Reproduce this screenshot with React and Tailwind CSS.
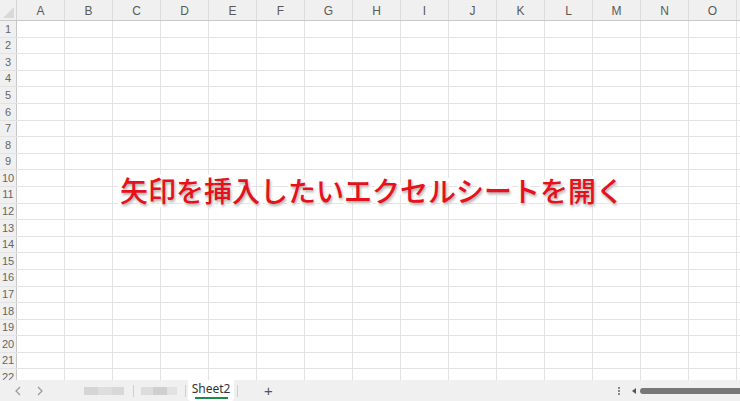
import React from 'react';

const cols = ['A', 'B', 'C', 'D', 'E', 'F', 'G', 'H', 'I', 'J', 'K', 'L', 'M', 'N', 'O', 'P'];
const rows = Array.from({ length: 22 }, (_, i) => i + 1);

function App() {
  return (
    <div className="w-[740px] h-[401px] overflow-hidden bg-white flex flex-col font-['Liberation_Sans','Noto_Sans_CJK_JP',sans-serif]">
      <div className="relative h-[380px] overflow-hidden">
        {/* column header */}
        <div className="flex h-[21px] bg-[#f0f0f0] border-b border-[#c8c8c8]">
          <div className="relative w-[17px] shrink-0 border-r border-[#d4d4d4]">
            <div className="absolute right-[2px] bottom-[2px] w-0 h-0 border-l-[11px] border-l-transparent border-b-[11px] border-b-[#d9d9d9]" />
          </div>
          {cols.map((c) => (
            <div key={c} className="w-[48px] shrink-0 border-r border-[#dcdcdc] flex items-center justify-center text-[12px] text-[#5a5a5a] pt-[1px]">
              {c}
            </div>
          ))}
        </div>
        {/* rows */}
        {rows.map((r) => (
          <div key={r} className="flex h-[16.6px] border-b border-[#e3e3e3]">
            <div className="w-[17px] shrink-0 bg-[#f0f0f0] border-r border-[#c8c8c8] flex items-center justify-center text-[11px] text-[#666]">
              {r}
            </div>
            {cols.map((c) => (
              <div key={c} className="w-[48px] shrink-0 border-r border-[#e3e3e3]" />
            ))}
          </div>
        ))}
        {/* caption */}
        <div className="absolute left-0 right-0 top-[172px] flex justify-center">
          <span className="pl-[4px] text-[28px] leading-[36px] font-medium text-[#e8101a] font-['Noto_Sans_CJK_JP',sans-serif] [paint-order:stroke_fill] [-webkit-text-stroke:6px_white] [text-shadow:1px_2px_3px_rgba(0,0,0,0.35)]">
            矢印を挿入したいエクセルシートを開く
          </span>
        </div>
      </div>
      {/* sheet tabs bar */}
      <div className="h-[21px] bg-[#f0f0f0] flex items-center text-[#777]">
        <div className="flex items-center w-[84px] pl-[14px] gap-[14px] text-[12px]">
          <svg width="8" height="10" viewBox="0 0 8 10"><path d="M6 1 L2 5 L6 9" fill="none" stroke="#999" strokeWidth="1.2" /></svg>
          <svg width="8" height="10" viewBox="0 0 8 10"><path d="M2 1 L6 5 L2 9" fill="none" stroke="#999" strokeWidth="1.2" /></svg>
        </div>
        <div className="flex h-[8px] w-[40px]">
          <div className="w-[14px] bg-[#d5d5d5]" />
          <div className="w-[14px] bg-[#dedede]" />
          <div className="w-[12px] bg-[#d8d8d8]" />
        </div>
        <div className="w-px h-[12px] bg-[#cfcfcf] ml-[9px] mr-[7px]" />
        <div className="flex h-[8px] w-[36px]">
          <div className="w-[12px] bg-[#dcdcdc]" />
          <div className="w-[14px] bg-[#cfcfcf]" />
          <div className="w-[10px] bg-[#e2e2e2]" />
        </div>
        <div className="w-px h-[12px] bg-[#cfcfcf] ml-[8px] mr-[2px]" />
        <div className="h-full w-[46px] bg-white flex flex-col items-center justify-center rounded-b-[3px]">
          <span className="text-[12px] leading-[14px] text-[#333] font-['Noto_Sans',sans-serif]">Sheet2</span>
          <div className="w-[33px] h-[2px] bg-[#1e8a4c] mt-[1px]" />
        </div>
        <div className="w-px h-[12px] bg-[#cfcfcf] ml-[3px]" />
        <div className="ml-[26px] text-[15px] leading-none text-[#555]">+</div>
        <div className="flex-1" />
        <div className="flex flex-col gap-[1px] mr-[12px]">
          <div className="w-[2px] h-[2px] bg-[#888]" />
          <div className="w-[2px] h-[2px] bg-[#888]" />
          <div className="w-[2px] h-[2px] bg-[#888]" />
        </div>
        <div className="w-0 h-0 border-y-[3.5px] border-y-transparent border-r-[4px] border-r-[#555] mr-[4px]" />
        <div className="w-[100px] h-[6px] rounded-l-full bg-[#777]" />
      </div>
    </div>
  );
}

export default App;
